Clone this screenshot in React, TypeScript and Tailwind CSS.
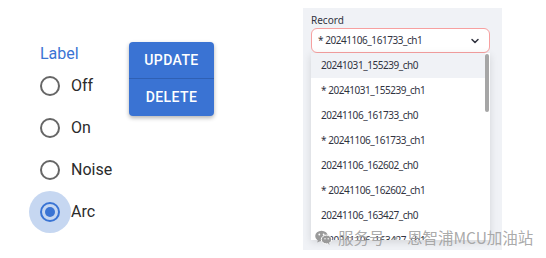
import { ChevronDown } from 'lucide-react';

const OPTIONS = ['Off', 'On', 'Noise', 'Arc'];

const RECORDS = [
  '20241031_155239_ch0',
  '* 20241031_155239_ch1',
  '20241106_161733_ch0',
  '* 20241106_161733_ch1',
  '20241106_162602_ch0',
  '* 20241106_162602_ch1',
  '20241106_163427_ch0',
  '* 20241106_163427_ch1',
];

function Radio({ label, checked }: { label: string; checked?: boolean }) {
  return (
    <div className="flex h-[42px] items-center whitespace-nowrap">
      <div
        className={`flex h-[42px] w-[42px] shrink-0 items-center justify-center rounded-full ${checked ? 'bg-[#c6d7f1]' : ''}`}
      >
        <div
          className={`flex h-[20px] w-[20px] items-center justify-center rounded-full border-2 ${
            checked ? 'border-[#3a74d4]' : 'border-[#666666]'
          }`}
        >
          {checked && <div className="h-[10px] w-[10px] rounded-full bg-[#3a74d4]" />}
        </div>
      </div>
      <span className="text-[16px] leading-none text-[#2b2b2b]">{label}</span>
    </div>
  );
}

function WeChatIcon() {
  return (
    <svg width="17" height="15" viewBox="0 0 17 15" className="shrink-0 text-[#9a9a9a]">
      <ellipse cx="6.5" cy="6" rx="6.3" ry="5.3" fill="currentColor" />
      <path d="M3 10 L2.2 12.5 L5.5 11 Z" fill="currentColor" />
      <ellipse cx="11.5" cy="9.5" rx="5.2" ry="4.4" fill="currentColor" stroke="#ffffff" strokeWidth="1" />
      <path d="M14 13 L14.8 14.8 L12.5 13.6 Z" fill="currentColor" />
      <circle cx="4.3" cy="4.5" r="0.9" fill="#ffffff" />
      <circle cx="8.6" cy="4.5" r="0.9" fill="#ffffff" />
      <circle cx="10" cy="8.7" r="0.7" fill="#ffffff" />
      <circle cx="13.2" cy="8.7" r="0.7" fill="#ffffff" />
    </svg>
  );
}

export default function App() {
  return (
    <div className="relative flex h-[258px] w-[546px] overflow-hidden bg-white font-['Roboto',sans-serif]">
      <div className="w-[129px] shrink-0 pl-[29px] pt-[43px]">
        <p className="ml-[11px] h-[22px] text-[16px] leading-[22px] text-[#3a74d4]">Label</p>
        {OPTIONS.map((opt) => (
          <Radio key={opt} label={opt} checked={opt === 'Arc'} />
        ))}
      </div>

      <div className="mt-[42px] flex h-[74px] w-[85px] shrink-0 flex-col overflow-hidden rounded-[4px] bg-[#3a73d3] shadow-[0_2px_4px_rgba(0,0,0,0.3)]">
        <div className="flex h-[37px] items-center justify-center border-b border-[#2f60b3] text-[14px] font-medium tracking-[0.4px] text-white">
          UPDATE
        </div>
        <div className="flex h-[37px] items-center justify-center text-[14px] font-medium tracking-[0.4px] text-white">
          DELETE
        </div>
      </div>

      <div className="ml-[89px] mt-[8px] h-[242px] w-[199px] shrink-0 bg-[#f0f2f6] pl-[8px] pr-[12px] pt-[5px] font-['Noto_Sans',sans-serif] text-[#31333f]">
        <p className="h-[15px] text-[10px] leading-[15px]">Record</p>
        <div className="flex h-[25px] items-center justify-between rounded-[6px] border border-[#f7a0a0] bg-white pl-[6px] pr-[8px]">
          <span className="text-[10px] tracking-[-0.45px]">* 20241106_161733_ch1</span>
          <ChevronDown size={12} strokeWidth={3} className="text-[#31333f]" />
        </div>
        <div className="relative h-[187px] overflow-hidden bg-white shadow-[0_2px_8px_rgba(0,0,0,0.12)]">
          {RECORDS.map((r, i) => (
            <div
              key={r}
              className={`flex h-[25px] items-center pl-[10px] text-[10px] tracking-[-0.45px] ${
                i === 0 ? 'mr-[5px] bg-[#f0f2f6]' : ''
              }`}
            >
              {r}
            </div>
          ))}
          <div className="absolute right-[1px] top-[1px] h-[58px] w-[4px] rounded-full bg-[#a6a6a6]" />
        </div>
      </div>

      <div className="absolute left-[315px] top-[227px] flex items-center gap-[6px] whitespace-nowrap font-['Noto_Sans_CJK_SC',sans-serif] text-[15.5px] leading-[20px] text-[#a0a0a0]/90">
        <WeChatIcon />
        <span>服务号 · 恩智浦MCU加油站</span>
      </div>
    </div>
  );
}
